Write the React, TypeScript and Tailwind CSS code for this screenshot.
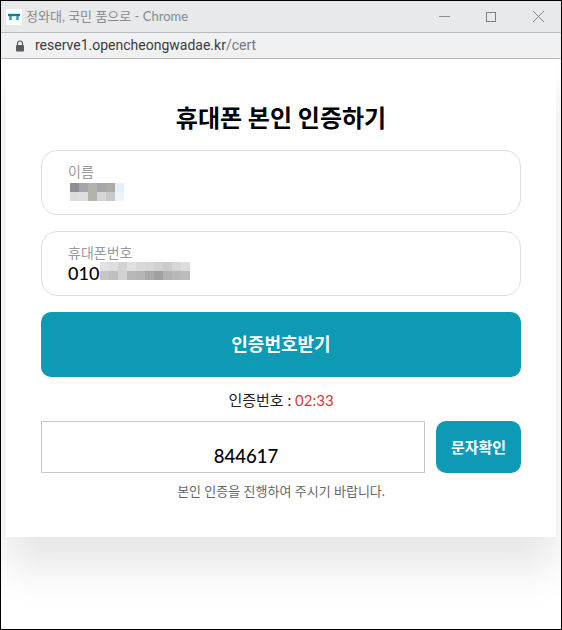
const font = { lato: 'font-["Lato","Noto_Sans_CJK_KR",sans-serif]' }

function Mosaic({ rows }: { rows: string[][] }) {
  return (
    <div className="flex flex-col">
      {rows.map((row, i) => (
        <div key={i} className="flex h-[9px]">
          {row.map((c, j) => (
            <div key={j} className="h-full w-[9px]" style={{ background: c }} />
          ))}
        </div>
      ))}
    </div>
  )
}

const nameBlur = [
  ['#8f8f93', '#a6a6aa', '#b2b2b2', '#a5a5aa', '#adaba8', '#e6eef6'],
  ['#dcdcdc', '#dedede', '#b5b2ae', '#d6d6d8', '#c8c8c6', '#eef4fa'],
]
const phoneBlur = [
  ['#e2e2e2', '#dedede', '#d2d2d2', '#e0e0e0', '#d8d8d8', '#d6d6d6', '#d0d0d0', '#cbcbcb', '#d6d6d6', '#dddddd'],
  ['#c6c6c6', '#bfbfbf', '#d2d2d2', '#b8b8b8', '#b4b4b4', '#a9a9a9', '#a0a0a0', '#b2b2b2', '#b8b8b8', '#bcbcbc'],
]

function Field({ label, children }: { label: string; children: React.ReactNode }) {
  return (
    <div className="flex h-[65px] flex-col rounded-2xl border border-[#dedede] bg-white pt-[12px] pl-[26px]">
      <span className="text-[14px] leading-[17px] text-[#9a9a9a]">{label}</span>
      <div className="mt-[2px] flex h-[20px] items-center">{children}</div>
    </div>
  )
}

export default function App() {
  return (
    <div className={`flex h-[630px] w-[562px] flex-col overflow-hidden border border-black bg-white ${font.lato}`}>
      <div className="flex h-[31px] shrink-0 items-center bg-[#e8e9eb] pl-[5px]">
        <div className="flex size-[16px] items-center justify-center bg-white">
          <svg width="14" height="8" viewBox="0 0 14 8" fill="none">
            <path d="M1 2h12" stroke="#0e7f95" strokeWidth="2.4" />
            <path d="M3.5 3v4M10.5 3v4" stroke="#2a9db5" strokeWidth="2.4" />
          </svg>
        </div>
        <span className="ml-[4px] text-[13px] text-[#8a8a8a]">정와대, 국민 품으로 - Chrome</span>
        <div className="ml-auto flex items-center gap-[36px] pr-[16px]">
          <div className="h-px w-[11px] bg-[#8f8f8f]" />
          <div className="size-[10px] border border-[#7f7f7f]" />
          <svg width="13" height="13" viewBox="0 0 13 13" stroke="#8a8a8a" strokeWidth="1">
            <path d="M1 1l11 11M12 1L1 12" />
          </svg>
        </div>
      </div>
      <div className="flex h-[27px] shrink-0 items-center border-y border-[#b9babc] bg-[#f0f1f3] pl-[14px]">
        <svg width="10" height="12" viewBox="0 0 10 12">
          <path d="M2.5 5V3.5a2.5 2.5 0 0 1 5 0V5" fill="none" stroke="#5a5b5e" strokeWidth="1.2" />
          <rect x="1" y="5" width="8" height="6.5" rx="1" fill="#5a5b5e" />
        </svg>
        <span className="ml-[10px] font-['Roboto',sans-serif] text-[14px] text-[#3c3c3e]">
          reserve1.opencheongwadae.kr<span className="text-[#77787a]">/cert</span>
        </span>
      </div>
      <div className="flex-1 bg-white px-[5px]">
        <div className="flex h-[478px] flex-col bg-white px-[35px] shadow-[0_30px_40px_rgba(0,0,0,0.10)]">
          <h1 className="mt-[42px] h-[34px] text-center text-[24px] leading-[34px] font-bold text-black">휴대폰 본인 인증하기</h1>
          <div className="mt-[15px] flex flex-col gap-[16px]">
            <Field label="이름">
              <div className="ml-[2px]">
                <Mosaic rows={nameBlur} />
              </div>
            </Field>
            <Field label="휴대폰번호">
              <span className="text-[18px] leading-[20px] font-medium text-black">010</span>
              <div className="ml-[1px] -translate-y-[2px]">
                <Mosaic rows={phoneBlur} />
              </div>
            </Field>
          </div>
          <button className="mt-[16px] h-[65px] rounded-[10px] bg-[#0e9ab5] text-[18px] font-bold text-white">인증번호받기</button>
          <p className="mt-[13px] text-center text-[15px] leading-[20px] text-[#222222]">
            인증번호 : <span className="text-[#d0393f]">02:33</span>
          </p>
          <div className="mt-[11px] flex gap-[11px]">
            <div className="flex h-[52px] w-[384px] items-end justify-center border border-[#c8c8c8] pb-[1px] pl-[26px] text-[18.5px] font-medium text-black">844617</div>
            <button className="h-[52px] w-[85px] rounded-[10px] bg-[#0e9ab5] text-[15px] font-bold text-white">문자확인</button>
          </div>
          <p className="mt-[8px] text-center text-[13px] leading-[20px] text-[#666666]">본인 인증을 진행하여 주시기 바랍니다.</p>
        </div>
      </div>
    </div>
  )
}
